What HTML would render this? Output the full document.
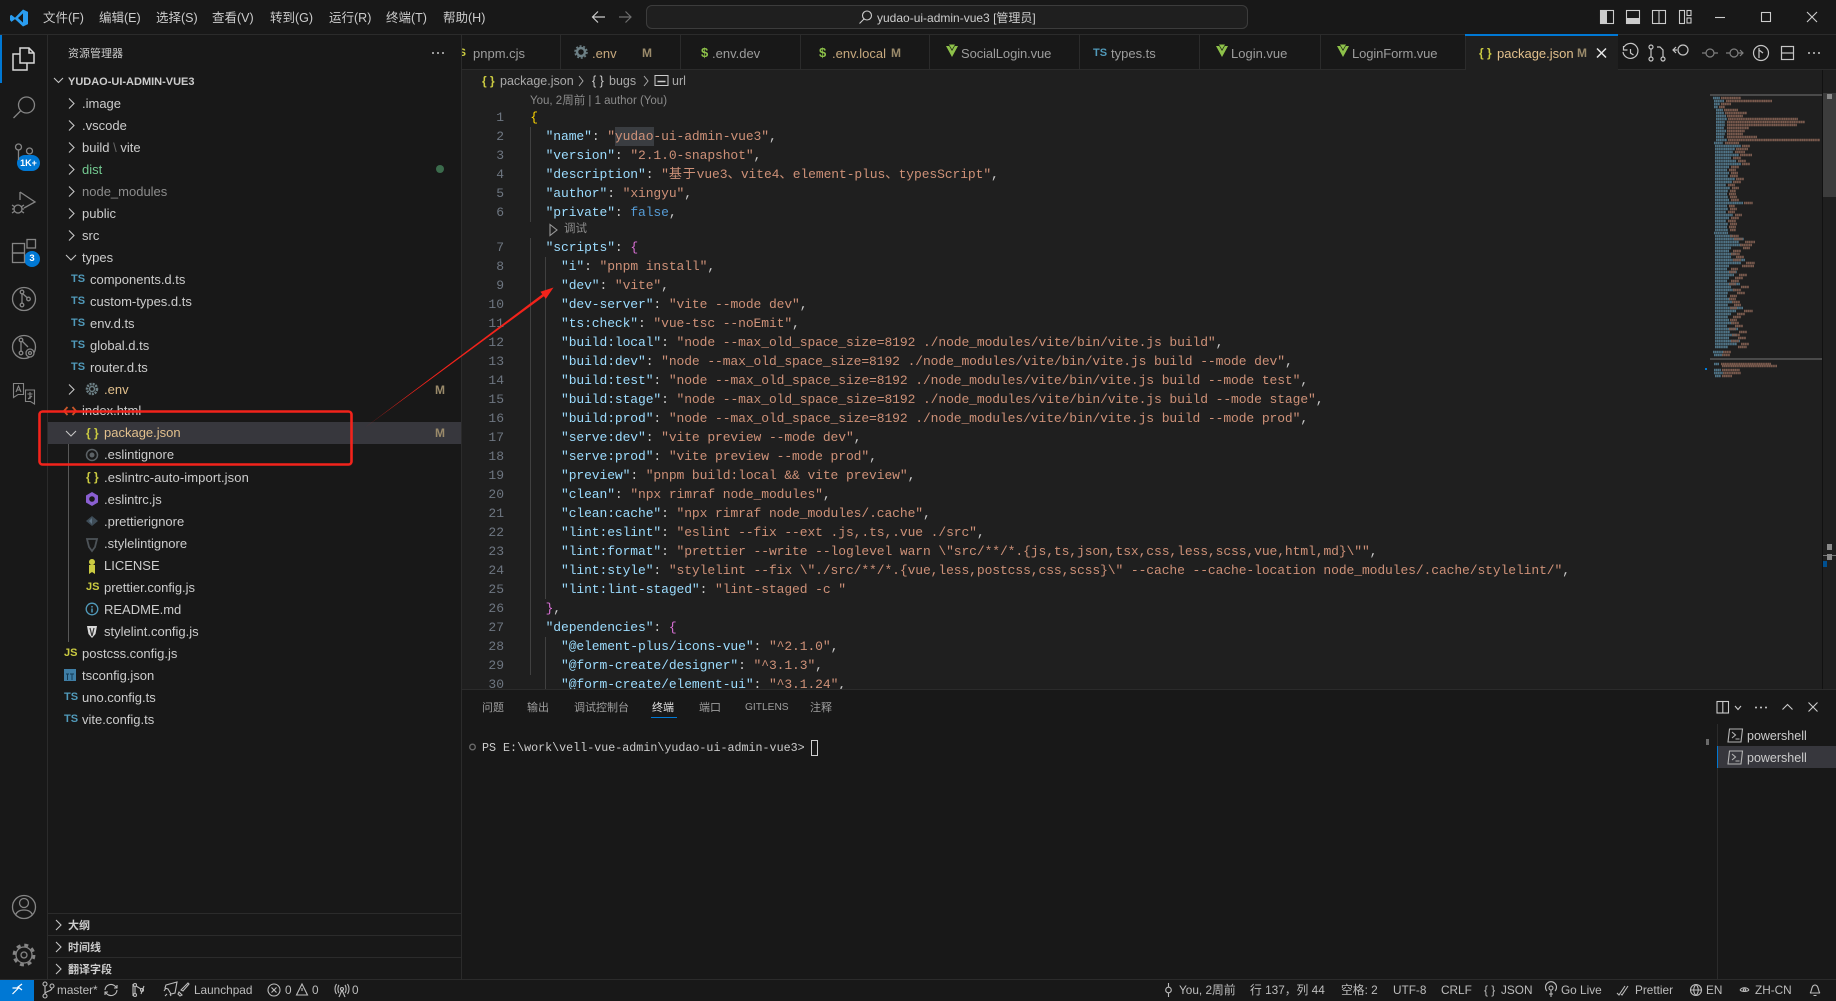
<!DOCTYPE html>
<html lang="zh-CN"><head><meta charset="utf-8"><title>package.json - yudao-ui-admin-vue3</title>
<style>
html,body{margin:0;padding:0;background:#181818;width:1836px;height:1001px;overflow:hidden}
body{position:relative;font-family:"Liberation Sans","Noto Sans CJK SC",sans-serif;font-size:13px;color:#ccc}
.b{position:absolute}
.w{position:absolute;left:0;top:1px;width:0;height:0}
.t{position:absolute;white-space:pre;height:22px;line-height:22px}
.g{color:#e2c08d}.d{color:#8c8c8c}
.ts{color:#519aba;font-weight:bold;font-size:11px}
.js{color:#cbcb41;font-weight:bold;font-size:11px}
.br{color:#cbcb41;font-weight:bold;font-size:12px}
.m{color:#9a8a6a;font-weight:bold;font-size:12px}
.tb{color:#9d9d9d}
pre{position:absolute;margin:0;font-family:"Liberation Mono","Noto Sans CJK SC",monospace;font-size:13px;line-height:19px;white-space:pre}
.n{left:470px;width:34px;text-align:right;color:#6e7681}
.c{left:530.2px;color:#ccc;letter-spacing:-.1px}
.k{color:#9cdcfe}.s{color:#ce9178}.f{color:#569cd6}.y{color:#ffd700}.p{color:#da70d6}
.st{font-size:11.8px;color:#bdbdbd}
.pt{font-size:11px;color:#9d9d9d}
.h{font-size:11px;font-weight:bold;color:#ccc}
</style></head><body>

<!-- backgrounds -->
<div class="b" style="left:0;top:0;width:1836px;height:34px;background:#181818;border-bottom:1px solid #2b2b2b"></div>
<div class="b" style="left:47px;top:35px;width:1px;height:944px;background:#2b2b2b"></div>
<div class="b" style="left:461px;top:35px;width:1px;height:944px;background:#2b2b2b"></div>
<div class="b" style="left:462px;top:35px;width:1374px;height:34px;background:#181818"></div>
<div class="b" style="left:462px;top:69px;width:1374px;height:1px;background:#2b2b2b"></div>
<div class="b" style="left:462px;top:70px;width:1374px;height:619px;background:#1f1f1f"></div>
<div class="b" style="left:462px;top:689px;width:1374px;height:1px;background:#2b2b2b"></div>
<div class="b" style="left:0;top:979px;width:1836px;height:1px;background:#2b2b2b"></div>
<div class="b" style="left:0;top:980px;width:34px;height:21px;background:#0078d4"></div>

<!-- explorer highlight -->
<div class="b" style="left:48px;top:422px;width:413px;height:22px;background:#37373d"></div>
<div class="b" style="left:68px;top:444px;width:1px;height:198px;background:#585858"></div>
<div class="b" style="left:48px;top:913px;width:413px;height:1px;background:#2b2b2b"></div>
<div class="b" style="left:48px;top:935px;width:413px;height:1px;background:#2b2b2b"></div>
<div class="b" style="left:48px;top:957px;width:413px;height:1px;background:#2b2b2b"></div>

<!-- tabs -->
<div class="b" style="left:560px;top:35px;width:1px;height:34px;background:#2b2b2b"></div>
<div class="b" style="left:680px;top:35px;width:1px;height:34px;background:#2b2b2b"></div>
<div class="b" style="left:800px;top:35px;width:1px;height:34px;background:#2b2b2b"></div>
<div class="b" style="left:929px;top:35px;width:1px;height:34px;background:#2b2b2b"></div>
<div class="b" style="left:1079px;top:35px;width:1px;height:34px;background:#2b2b2b"></div>
<div class="b" style="left:1199px;top:35px;width:1px;height:34px;background:#2b2b2b"></div>
<div class="b" style="left:1320px;top:35px;width:1px;height:34px;background:#2b2b2b"></div>
<div class="b" style="left:1465px;top:35px;width:153px;height:35px;background:#1f1f1f;border-left:1px solid #2b2b2b;box-sizing:border-box"></div>
<div class="b" style="left:1465px;top:34px;width:153px;height:2px;background:#0078d4"></div>

<!-- command center -->
<div class="b" style="left:646px;top:5px;width:602px;height:24px;box-sizing:border-box;background:#1f1f1f;border:1px solid #3c3c3c;border-radius:6px"></div>

<div class="w">
<!-- menu -->
<div class="t" style="left:43px;top:6px;font-size:12.5px">文件(F)</div>
<div class="t" style="left:99px;top:6px;font-size:12.5px">编辑(E)</div>
<div class="t" style="left:156px;top:6px;font-size:12.5px">选择(S)</div>
<div class="t" style="left:212px;top:6px;font-size:12.5px">查看(V)</div>
<div class="t" style="left:270px;top:6px;font-size:12.5px">转到(G)</div>
<div class="t" style="left:329px;top:6px;font-size:12.5px">运行(R)</div>
<div class="t" style="left:386px;top:6px;font-size:12.5px">终端(T)</div>
<div class="t" style="left:443px;top:6px;font-size:12.5px">帮助(H)</div>
<div class="t" style="left:877px;top:6px;font-size:12px">yudao-ui-admin-vue3 [管理员]</div>

<!-- explorer -->
<div class="t" style="left:68px;top:42px;font-size:11px">资源管理器</div>
<div class="t h" style="left:68px;top:70px">YUDAO-UI-ADMIN-VUE3</div>
<div class="t" style="left:82px;top:92px">.image</div>
<div class="t" style="left:82px;top:114px">.vscode</div>
<div class="t" style="left:82px;top:136px">build<span style="color:#666"> \ </span>vite</div>
<div class="t" style="left:82px;top:158px;color:#73c991">dist</div>
<div class="t d" style="left:82px;top:180px">node_modules</div>
<div class="t" style="left:82px;top:202px">public</div>
<div class="t" style="left:82px;top:224px">src</div>
<div class="t" style="left:82px;top:246px">types</div>
<div class="t ts" style="left:71px;top:267px">TS</div><div class="t" style="left:90px;top:268px">components.d.ts</div>
<div class="t ts" style="left:71px;top:289px">TS</div><div class="t" style="left:90px;top:290px">custom-types.d.ts</div>
<div class="t ts" style="left:71px;top:311px">TS</div><div class="t" style="left:90px;top:312px">env.d.ts</div>
<div class="t ts" style="left:71px;top:333px">TS</div><div class="t" style="left:90px;top:334px">global.d.ts</div>
<div class="t ts" style="left:71px;top:355px">TS</div><div class="t" style="left:90px;top:356px">router.d.ts</div>
<div class="t g" style="left:104px;top:378px">.env</div>
<div class="t m" style="left:435px;top:378px">M</div>
<div class="t" style="left:82px;top:399px">index.html</div>
<div class="t br" style="left:86px;top:421px">{ }</div>
<div class="t g" style="left:104px;top:421px">package.json</div>
<div class="t m" style="left:435px;top:421px">M</div>
<div class="t" style="left:104px;top:443px">.eslintignore</div>
<div class="t br" style="left:86px;top:465px">{ }</div>
<div class="t" style="left:104px;top:466px;letter-spacing:.1px">.eslintrc-auto-import.json</div>
<div class="t" style="left:104px;top:488px">.eslintrc.js</div>
<div class="t" style="left:104px;top:510px">.prettierignore</div>
<div class="t" style="left:104px;top:532px">.stylelintignore</div>
<div class="t" style="left:104px;top:554px">LICENSE</div>
<div class="t js" style="left:86px;top:575px">JS</div><div class="t" style="left:104px;top:576px">prettier.config.js</div>
<div class="t" style="left:104px;top:598px">README.md</div>
<div class="t" style="left:104px;top:620px">stylelint.config.js</div>
<div class="t js" style="left:64px;top:641px">JS</div><div class="t" style="left:82px;top:642px">postcss.config.js</div>
<div class="t" style="left:82px;top:664px">tsconfig.json</div>
<div class="t ts" style="left:64px;top:685px">TS</div><div class="t" style="left:82px;top:686px">uno.config.ts</div>
<div class="t ts" style="left:64px;top:707px">TS</div><div class="t" style="left:82px;top:708px">vite.config.ts</div>
<div class="t h" style="left:68px;top:914px">大纲</div>
<div class="t h" style="left:68px;top:936px">时间线</div>
<div class="t h" style="left:68px;top:958px">翻译字段</div>

<!-- tab labels -->
<div class="t tb" style="left:473px;top:42px">pnpm.cjs</div>
<div class="t" style="left:592px;top:42px;color:#c7a97e">.env</div><div class="t m" style="left:642px;top:41px">M</div>
<div class="t" style="left:701px;top:41px;color:#8dc149;font-weight:bold">$</div><div class="t tb" style="left:712px;top:42px">.env.dev</div>
<div class="t" style="left:819px;top:41px;color:#8dc149;font-weight:bold">$</div><div class="t" style="left:832px;top:42px;color:#c7a97e">.env.local</div><div class="t m" style="left:891px;top:41px">M</div>
<div class="t tb" style="left:961px;top:42px;letter-spacing:-.1px">SocialLogin.vue</div>
<div class="t ts" style="left:1093px;top:41px">TS</div><div class="t tb" style="left:1111px;top:42px">types.ts</div>
<div class="t tb" style="left:1231px;top:42px">Login.vue</div>
<div class="t tb" style="left:1352px;top:42px;letter-spacing:-.1px">LoginForm.vue</div>
<div class="t br" style="left:1479px;top:41px">{ }</div><div class="t g" style="left:1497px;top:42px">package.json</div><div class="t m" style="left:1577px;top:41px">M</div>
</div>
<div class="b" style="left:462px;top:46px;width:4px;height:14px;overflow:hidden"><div class="t js" style="right:0;top:-4px">JS</div></div>

<!-- breadcrumbs -->
<div class="t br" style="left:482px;top:70px">{ }</div>
<div class="t" style="left:500px;top:70px;font-size:12.5px;color:#a9a9a9">package.json</div>
<div class="t" style="left:592px;top:70px;font-size:12.5px;color:#ccc">{ }</div>
<div class="t" style="left:609px;top:70px;font-size:12.5px;color:#a9a9a9">bugs</div>
<div class="t" style="left:672px;top:70px;font-size:12.5px;color:#a9a9a9">url</div>
<div class="t" style="left:530px;top:90px;font-size:11.5px;color:#8b8b8b">You, 2周前 | 1 author (You)</div>
<div class="t" style="left:564px;top:218px;font-size:11.5px;color:#8b8b8b">调试</div>

<!-- indent guides and selection -->
<div class="b" style="left:530px;top:127px;width:1px;height:95px;background:#404040"></div>
<div class="b" style="left:530px;top:238px;width:1px;height:437px;background:#404040"></div>
<div class="b" style="left:545px;top:257px;width:1px;height:342px;background:#404040"></div>
<div class="b" style="left:545px;top:637px;width:1px;height:52px;background:#404040"></div>
<div class="b" style="left:615px;top:127px;width:39px;height:19px;background:#3a3d41"></div>

<!-- code -->
<div class="b" style="left:462px;top:70px;width:1246px;height:619px;overflow:hidden">
<pre class="n" style="left:8px;top:38px">1
2
3
4
5
6</pre>
<pre class="n" style="left:8px;top:168px">7
8
9
10
11
12
13
14
15
16
17
18
19
20
21
22
23
24
25
26
27
28
29
30</pre>
<pre class="c" style="left:68.2px;top:38px"><span class="y">{</span>
  <span class="k">"name"</span>: <span class="s">"yudao-ui-admin-vue3"</span>,
  <span class="k">"version"</span>: <span class="s">"2.1.0-snapshot"</span>,
  <span class="k">"description"</span>: <span class="s">"<span style="letter-spacing:.9px">基于</span>vue3<span style="letter-spacing:.4px">、</span>vite4<span style="letter-spacing:.4px">、</span>element-plus<span style="letter-spacing:.4px">、</span>typesScript"</span>,
  <span class="k">"author"</span>: <span class="s">"xingyu"</span>,
  <span class="k">"private"</span>: <span class="f">false</span>,</pre>
<pre class="c" style="left:68.2px;top:168px">  <span class="k">"scripts"</span>: <span class="p">{</span>
    <span class="k">"i"</span>: <span class="s">"pnpm install"</span>,
    <span class="k">"dev"</span>: <span class="s">"vite"</span>,
    <span class="k">"dev-server"</span>: <span class="s">"vite --mode dev"</span>,
    <span class="k">"ts:check"</span>: <span class="s">"vue-tsc --noEmit"</span>,
    <span class="k">"build:local"</span>: <span class="s">"node --max_old_space_size=8192 ./node_modules/vite/bin/vite.js build"</span>,
    <span class="k">"build:dev"</span>: <span class="s">"node --max_old_space_size=8192 ./node_modules/vite/bin/vite.js build --mode dev"</span>,
    <span class="k">"build:test"</span>: <span class="s">"node --max_old_space_size=8192 ./node_modules/vite/bin/vite.js build --mode test"</span>,
    <span class="k">"build:stage"</span>: <span class="s">"node --max_old_space_size=8192 ./node_modules/vite/bin/vite.js build --mode stage"</span>,
    <span class="k">"build:prod"</span>: <span class="s">"node --max_old_space_size=8192 ./node_modules/vite/bin/vite.js build --mode prod"</span>,
    <span class="k">"serve:dev"</span>: <span class="s">"vite preview --mode dev"</span>,
    <span class="k">"serve:prod"</span>: <span class="s">"vite preview --mode prod"</span>,
    <span class="k">"preview"</span>: <span class="s">"pnpm build:local &amp;&amp; vite preview"</span>,
    <span class="k">"clean"</span>: <span class="s">"npx rimraf node_modules"</span>,
    <span class="k">"clean:cache"</span>: <span class="s">"npx rimraf node_modules/.cache"</span>,
    <span class="k">"lint:eslint"</span>: <span class="s">"eslint --fix --ext .js,.ts,.vue ./src"</span>,
    <span class="k">"lint:format"</span>: <span class="s">"prettier --write --loglevel warn \"src/**/*.{js,ts,json,tsx,css,less,scss,vue,html,md}\""</span>,
    <span class="k">"lint:style"</span>: <span class="s">"stylelint --fix \"./src/**/*.{vue,less,postcss,css,scss}\" --cache --cache-location node_modules/.cache/stylelint/"</span>,
    <span class="k">"lint:lint-staged"</span>: <span class="s">"lint-staged -c "</span>
  <span class="p">}</span>,
  <span class="k">"dependencies"</span>: <span class="p">{</span>
    <span class="k">"@element-plus/icons-vue"</span>: <span class="s">"^2.1.0"</span>,
    <span class="k">"@form-create/designer"</span>: <span class="s">"^3.1.3"</span>,
    <span class="k">"@form-create/element-ui"</span>: <span class="s">"^3.1.24"</span>,</pre>
</div>

<!-- scrollbar -->
<div class="b" style="left:1822px;top:70px;width:1px;height:619px;background:#111"></div>
<div class="b" style="left:1823px;top:93px;width:13px;height:104px;background:#3c3c3c"></div>
<div class="b" style="left:1827px;top:94px;width:5px;height:5px;background:#8a8a8a"></div>
<div class="b" style="left:1827px;top:544px;width:5px;height:6px;background:#8a8a8a"></div>
<div class="b" style="left:1823px;top:555px;width:13px;height:1px;background:#777"></div>
<div class="b" style="left:1827px;top:554px;width:5px;height:6px;background:#8a8a8a"></div>
<div class="b" style="left:1823px;top:561px;width:4px;height:6px;background:#004f8f"></div>

<!-- panel -->
<div class="t pt" style="left:482px;top:697px">问题</div>
<div class="t pt" style="left:527px;top:697px">输出</div>
<div class="t pt" style="left:574px;top:697px">调试控制台</div>
<div class="t pt" style="left:652px;top:697px;color:#e0e0e0">终端</div>
<div class="b" style="left:651px;top:717px;width:26px;height:1px;background:#0078d4"></div>
<div class="t pt" style="left:699px;top:697px">端口</div>
<div class="t pt" style="left:745px;top:697px;font-size:10.2px">GITLENS</div>
<div class="t pt" style="left:810px;top:697px">注释</div>
<pre style="left:482px;top:738px;font-size:11.7px;line-height:20px;color:#ccc">PS E:\work\vell-vue-admin\yudao-ui-admin-vue3&gt;</pre>
<div class="b" style="left:811px;top:740px;width:7px;height:16px;box-sizing:border-box;border:1px solid #d0d0d0"></div>
<div class="b" style="left:1717px;top:724px;width:1px;height:255px;background:#2b2b2b"></div>
<div class="b" style="left:1718px;top:746px;width:118px;height:22px;background:#37373d"></div>
<div class="b" style="left:1717px;top:746px;width:1px;height:22px;background:#0078d4"></div>
<div class="b" style="left:1706px;top:739px;width:3px;height:6px;background:#6a6a6a"></div>
<div class="t" style="left:1747px;top:725px;font-size:12.5px;color:#ccc">powershell</div>
<div class="t" style="left:1747px;top:747px;font-size:12.5px;color:#ccc">powershell</div>

<!-- status bar -->
<div class="t st" style="left:57px;top:979px">master*</div>
<div class="t st" style="left:194px;top:979px">Launchpad</div>
<div class="t st" style="left:285px;top:979px">0</div>
<div class="t st" style="left:312px;top:979px">0</div>
<div class="t st" style="left:352px;top:979px">0</div>
<div class="t st" style="left:1179px;top:979px">You, 2周前</div>
<div class="t st" style="left:1250px;top:979px">行 137，列 44</div>
<div class="t st" style="left:1341px;top:979px">空格: 2</div>
<div class="t st" style="left:1393px;top:979px">UTF-8</div>
<div class="t st" style="left:1441px;top:979px">CRLF</div>
<div class="t st" style="left:1484px;top:979px">{ }</div>
<div class="t st" style="left:1501px;top:979px">JSON</div>
<div class="t st" style="left:1561px;top:979px">Go Live</div>
<div class="t st" style="left:1635px;top:979px">Prettier</div>
<div class="t st" style="left:1706px;top:979px">EN</div>
<div class="t st" style="left:1755px;top:979px">ZH-CN</div>

<!-- badges -->
<div class="b" style="left:17px;top:155px;width:23px;height:16px;border-radius:8px;background:#0078d4"></div>
<div class="t" style="left:17px;top:152px;width:23px;text-align:center;font-size:9px;font-weight:bold;color:#fff">1K+</div>
<div class="b" style="left:24px;top:251px;width:16px;height:16px;border-radius:8px;background:#0078d4"></div>
<div class="t" style="left:24px;top:248px;width:16px;text-align:center;font-size:9.5px;font-weight:bold;color:#fff">3</div>

<!-- icons -->
<svg class="b" style="left:0;top:0" width="1836" height="1001" viewBox="0 0 1836 1001" fill="none">
<!-- logo -->
<path fill="#2a9df0" d="M21 10.500l5 2.400v12.200l-5 2.400-8-7.400-3.600 2.800L8 21v-4.200l1.400-.9 3.600 2.800zM21 14.400l-5 4.600 5 4.600z" transform="translate(2 -1)"/>
<!-- title arrows -->
<path stroke="#ccc" stroke-width="1.200" d="M593 17h12M598 11.500L592.500 17l5.500 5.500"/>
<path stroke="#6f6f6f" stroke-width="1.200" d="M619 17h12M625.500 11.500L631 17l-5.500 5.500"/>
<circle cx="867" cy="15.500" r="4.500" stroke="#ccc" stroke-width="1.100"/><path stroke="#ccc" stroke-width="1.100" d="M864 19l-4.500 4.500"/>
<!-- layout icons -->
<g stroke="#ccc" stroke-width="1.100" transform="translate(-3 0)">
<rect x="1603.500" y="10.500" width="13" height="13"/><rect x="1604" y="11" width="6" height="12" fill="#ccc" stroke="none"/>
<rect x="1629.500" y="10.500" width="13" height="13"/><rect x="1630" y="18" width="12" height="5" fill="#ccc" stroke="none"/>
<rect x="1655.500" y="10.500" width="13" height="13"/><path d="M1662 10.500v13"/>
<rect x="1682.500" y="10.500" width="5" height="13"/><rect x="1690" y="10.500" width="4" height="5"/><rect x="1690" y="18" width="4" height="5"/>
<path d="M1718 17.500h10"/><rect x="1764.500" y="12.500" width="9" height="9"/><path d="M1810 12l10 10M1820 12l-10 10"/>
</g>
<!-- activity bar -->
<rect x="0" y="35" width="2" height="48" fill="#0078d4"/>
<g stroke="#d7d7d7" stroke-width="1.500"><path d="M20 60V48h9l5 5v10H20zM29 48v5h5"/><path d="M20 54h-7v16h14v-7"/></g>
<g stroke="#858585" stroke-width="1.300">
<circle cx="26.500" cy="105" r="8"/><path d="M20.500 111l-7 7"/>
<circle cx="18.500" cy="147" r="3"/><circle cx="29.500" cy="151" r="3"/><path d="M18.500 150v10"/>
<path d="M20 192l15 10-11 6M20 192v8"/><circle cx="18" cy="209" r="4"/><path d="M12 205l3 2M24 205l-3 2M12 213l3-2M24 213l-3-2M12 209h2M24 209h-2"/>
<rect x="12.500" y="243.500" width="12" height="9.500"/><rect x="12.500" y="253" width="12" height="9.500"/><rect x="27" y="239.500" width="8.500" height="8.500"/>
<circle cx="24" cy="299" r="11.500"/><circle cx="22" cy="292" r="1.800"/><circle cx="22" cy="305" r="1.800"/><circle cx="28.500" cy="299" r="1.800"/><path d="M22 294v9M22.500 293.500l5 4.500"/>
<circle cx="24" cy="347" r="11.500"/><circle cx="21" cy="340" r="1.800"/><circle cx="21" cy="353" r="1.800"/><path d="M21 342v9M22 341l6 6"/><circle cx="30" cy="353" r="4" fill="#181818"/><circle cx="30" cy="353" r="1.500"/>
<g stroke-width="1.100"><path d="M13.500 383.500h10v11h-5.500l-4.500 3zM25.500 390h9v14l-4-2.500h-5zM16 392l2.500-6 2.500 6M17 390h3M27.500 394h5M30 392v7M28 399l4-3"/></g>
<circle cx="24" cy="907" r="11.500"/><circle cx="24" cy="903" r="4.500"/><path d="M15.500 915c1.500-4 5-5 8.500-5s7 1 8.500 5"/>
<circle cx="24" cy="955" r="3"/><circle cx="24" cy="955" r="8"/><circle cx="24" cy="955" r="10" stroke-width="2.800" stroke-dasharray="4 3.850"/>
</g>
<!-- explorer chevrons -->
<g stroke="#c5c5c5" stroke-width="1.100">
<path d="M54 78l4.500 4.500L63 78"/>
<path d="M69 98.500l5 5-5 5M69 120.500l5 5-5 5M69 142.500l5 5-5 5M69 164.500l5 5-5 5M69 186.500l5 5-5 5M69 208.500l5 5-5 5M69 230.500l5 5-5 5"/>
<path d="M66 255l5 5 5-5"/>
<path d="M69 384.500l5 5-5 5"/>
<path d="M66 431l5 5 5-5"/>
<path d="M56 920l5 5-5 5M56 942l5 5-5 5M56 964l5 5-5 5"/>
</g>
<g fill="#c5c5c5"><circle cx="433" cy="53" r="1"/><circle cx="438" cy="53" r="1"/><circle cx="443" cy="53" r="1"/></g>
<circle cx="440" cy="169" r="4" fill="#3b6b4c"/>
<!-- explorer file icons -->
<circle cx="92" cy="389" r="5" stroke="#6d8086" stroke-width="2.500" stroke-dasharray="2 1"/><circle cx="92" cy="389" r="2.500" stroke="#6d8086" stroke-width="1.500"/>
<path stroke="#c9562a" stroke-width="1.800" d="M67.500 407l-3.500 4 3.500 4M72.500 407l3.500 4-3.500 4"/>
<circle cx="92" cy="455" r="5.500" stroke="#5c6266" stroke-width="1.500"/><circle cx="92" cy="455" r="2.500" fill="#5c6266"/>
<path d="M92 492l6 3.500v7l-6 3.500-6-3.500v-7z" fill="#8a5fd1"/><circle cx="92" cy="499" r="2.800" fill="#1a1a1a"/>
<path d="M92 516l6 5-6 5-6-5z" fill="#3e4c57"/><path d="M89 521l3-3v6z" fill="#5d7283"/>
<path d="M87 539h10l-2 8-3 4-3-4z" fill="none" stroke="#4d5358" stroke-width="1.800"/>
<path d="M92 559a3 3 0 1 1-.01 0zM89 565v9l3-2 3 2v-9" fill="#cbcb41"/>
<circle cx="92" cy="609" r="5.800" stroke="#519aba" stroke-width="1.300"/><path d="M92 606v1.500M92 608.500v4" stroke="#519aba" stroke-width="1.500"/>
<path d="M87 626h10l-1.500 8-3.500 4-3.500-4z" fill="#d9d9d9"/><path d="M90 628l2 8 2-8" stroke="#333" stroke-width="1.200"/>
<rect x="64" y="669" width="12" height="12" fill="#3f7ea6"/><path d="M70 674h4M72 674v6M66 674h3M67.500 674v6" stroke="#123a55" stroke-width="1"/>
<!-- tab icons -->
<circle cx="581" cy="52" r="4" stroke="#6d8086" stroke-width="2.500"/><circle cx="581" cy="52" r="6" stroke="#6d8086" stroke-width="1.500" stroke-dasharray="2 1.800"/>
<path fill="#8dc149" d="M946 46h3.200l2.800 5 2.800-5h3.200l-6 11z M947 44.500h2l3 5 3-5h2" />
<path fill="#8dc149" d="M1216 46h3.200l2.800 5 2.800-5h3.200l-6 11z M1217 44.500h2l3 5 3-5h2"/>
<path fill="#8dc149" d="M1337 46h3.200l2.800 5 2.800-5h3.200l-6 11z M1338 44.500h2l3 5 3-5h2"/>
<path stroke="#e8e8e8" stroke-width="1.500" d="M1597 48.500l9 9M1606 48.500l-9 9"/>
<!-- editor actions -->
<g stroke="#c5c5c5" stroke-width="1.200" transform="translate(-3 0)">
<path d="M1627 47a7.500 7.500 0 1 1-1 5M1626.500 46v4h4M1633.500 49v4l3 2"/>
<circle cx="1654" cy="47" r="2"/><circle cx="1666" cy="59" r="2"/><circle cx="1654" cy="59" r="2"/><path d="M1654 49v8M1666 57v-7l-3-3h-3"/>
<circle cx="1686" cy="50" r="5"/><path d="M1680 50h-3.500M1679 47l-3 3 3 3M1683 58h.01M1686 58h.01M1689 58h.01"/>
<g stroke="#7f7f7f"><circle cx="1713" cy="53" r="4"/><path d="M1705 53h4M1717 53h4"/><circle cx="1737" cy="53" r="4"/><path d="M1729 53h4M1741 53h5M1743 50l3 3-3 3"/></g>
<circle cx="1764" cy="53" r="7.500"/><path d="M1762 48v10M1762 50l4 3"/>
<rect x="1784.500" y="46.500" width="12" height="13"/><path d="M1784.500 53h12"/>
</g>
<g fill="#c5c5c5"><circle cx="1809" cy="53" r="1"/><circle cx="1814" cy="53" r="1"/><circle cx="1819" cy="53" r="1"/></g>
<!-- breadcrumb icons -->
<path stroke="#a9a9a9" stroke-width="1" d="M579 76l4 5-4 5M644 76l4 5-4 5"/>
<rect x="655" y="75.500" width="13" height="10" stroke="#ccc" stroke-width="1"/><path d="M657.500 81.500h8" stroke="#ccc" stroke-width="1.500"/>
<path d="M550 223.500l7 5.500-7 5.500z" transform="translate(0 1)" stroke="#9a9a9a" stroke-width="1.100"/>
<!-- panel icons -->
<circle cx="472.500" cy="747" r="2.800" stroke="#6a6a6a" stroke-width="1.300"/>
<g stroke="#ccc" stroke-width="1.100">
<rect x="1717" y="701.500" width="11.500" height="11.500"/><path d="M1722.800 701.500v11.500"/>
<path d="M1735 706l3 3.500 3-3.500"/><path d="M1782.500 709.500l5-5 5 5"/><path d="M1808.500 702.500l9 9M1817.500 702.500l-9 9"/>
<path d="M1729.500 729h13l-1.500 13h-13z" stroke="#b5b5b5"/><path d="M1732 732l3.500 3-3.500 3M1735.500 739h4" stroke="#b5b5b5"/>
<path d="M1729.500 751h13l-1.500 13h-13z" stroke="#b5b5b5"/><path d="M1732 754l3.500 3-3.500 3M1735.500 761h4" stroke="#b5b5b5"/>
</g>
<g fill="#ccc"><circle cx="1756" cy="707.500" r="1"/><circle cx="1761" cy="707.500" r="1"/><circle cx="1766" cy="707.500" r="1"/></g>
<!-- status icons -->
<path stroke="#fff" stroke-width="1.200" d="M12.500 994l6-6-6-0M22 984l-4 3 4 3"/>
<g stroke="#bdbdbd" stroke-width="1.100">
<circle cx="45" cy="984" r="2"/><circle cx="45" cy="996" r="2"/><circle cx="52" cy="986" r="2"/><path d="M45 986v8M52 988c0 3-5 3-7 5"/>
<path d="M105 990a6 6 0 0 1 10-4l2 2M117 990a6 6 0 0 1-10 4l-2-2M117 985v3h-3M105 995v-3h3"/>
<circle cx="135" cy="985" r="1.500"/><circle cx="135" cy="995" r="1.500"/><circle cx="142" cy="990" r="1.500"/><path d="M135 987v6M136 986l5 3M133 984v12M144 986l-3 8"/>
<path d="M166 985l11-3-2 11-4 1-3-5-3-1zM166 988l-2 3M170 994l1 2M165 996l2-2"/>
<path d="M181 990l7-7 1 1-6 7zM179 992l3 3-2 1-2-2z"/>
<circle cx="274" cy="990" r="6"/><path d="M271.500 987.500l5 5M276.500 987.500l-5 5"/>
<path d="M302 984l5.500 11h-11zM302 988v3"/>
<circle cx="342" cy="989" r="1.500"/><path d="M342 990l-3 7M342 990l3 7M339 985c-1.500 2-1.500 6 0 8M345 985c1.500 2 1.500 6 0 8M336.500 984c-2 3-2 7 0 10M347.500 984c2 3 2 7 0 10"/>
<circle cx="1168.500" cy="990" r="2.800"/><path d="M1168.500 983v4M1168.500 993v4"/>
<g transform="translate(-3 0)"><circle cx="1554" cy="988" r="2"/><path d="M1550 991a5.500 5.500 0 1 1 8 0M1554 990v7M1552 994h4"/></g>
<path d="M1617 993l2 2 6-9M1621 994l1 1 6-9"/>
<circle cx="1696" cy="990" r="5.500"/><path d="M1690.500 990h11M1696 984.500c-3 3-3 8 0 11M1696 984.500c3 3 3 8 0 11"/>
<path d="M1740 990c2-3 7-3 9 0M1740 990c2 2 7 2 9 0"/><circle cx="1744.500" cy="990" r="1.200"/>
<path d="M1810 993c2-1 1-8 5-8s3 7 5 8zM1813.500 995.500h3"/>
</g>
<!-- minimap -->
<rect x="1710" y="94" width="112" height="2" fill="#4a4a4a"/>
<rect x="1710" y="358" width="112" height="2" fill="#4a4a4a"/>
<rect x="1705" y="368" width="2" height="2" fill="#0078d4"/>
<path stroke="#4f7386" stroke-width="2.500" stroke-dasharray="1.500 .3" d="M1713 98h7M1714 101h10M1714 104h6M1714 107h4M1716 110h7M1716 113h8M1716 116h10M1716 119h11M1716 122h9M1716 125h9M1716 128h8M1716 131h10M1716 134h9M1716 137h8M1716 140h11M1714 143h9M1715 146h26M1715 149h20M1715 152h18M1715 155h24M1715 158h16M1715 161h21M1715 164h26M1715 167h14M1715 170h12M1715 173h14M1715 176h13M1715 179h20M1715 182h17M1715 185h11M1715 188h15M1715 191h13M1715 194h12M1715 197h13M1715 200h14M1715 203h28M1715 206h12M1715 209h13M1715 212h11M1715 215h18M1715 218h14M1715 221h11M1715 224h13M1715 227h12M1715 230h13M1714 233h14M1715 236h17M1715 239h29M1715 242h24M1715 245h27M1715 248h16M1715 251h14M1715 254h20M1715 257h16M1715 260h30M1715 263h26M1715 266h14M1715 269h12M1715 272h22M1715 275h19M1715 278h14M1715 281h12M1715 284h25M1715 287h16M1715 290h20M1715 293h13M1715 296h12M1715 299h15M1715 302h17M1715 305h13M1715 308h28M1715 311h21M1715 314h16M1715 317h13M1715 320h14M1715 323h19M1715 326h12M1715 329h23M1715 332h15M1715 335h22M1715 338h14M1715 341h25M1715 344h22M1715 347h13M1713 352h10M1714 355h8M1714 364h5M1714 370h7M1714 373h9M1715 376h6"/>
<path stroke="#7a5b4e" stroke-width="2.500" stroke-dasharray="1.500 .3" d="M1721 98h20M1726 101h46M1721 104h10M1719 107h6M1724 110h14M1725 113h22M1727 116h16M1728 119h70M1727 122h78M1727 125h70M1727 128h22M1727 131h18M1727 134h16M1727 137h30M1728 140h92M1725 143h14M1742 146h8M1736 149h12M1735 152h10M1740 155h12M1733 158h8M1738 161h8M1742 164h8M1731 167h8M1729 170h7M1731 173h7M1730 176h8M1736 179h8M1733 182h8M1728 185h7M1732 188h7M1730 191h6M1729 194h7M1730 197h7M1731 200h8M1744 203h9M1729 206h6M1730 209h7M1728 212h7M1735 215h7M1731 218h8M1728 221h8M1730 224h7M1729 227h7M1730 230h6M1730 236h9M1734 239h9M1745 242h10M1740 245h12M1743 248h7M1733 251h8M1731 254h9M1736 257h8M1733 260h8M1746 263h9M1742 266h12M1731 269h7M1729 272h7M1739 275h8M1735 278h8M1731 281h8M1729 284h7M1741 287h8M1733 290h8M1737 293h8M1730 296h7M1729 299h7M1732 302h8M1734 305h7M1730 308h7M1744 311h9M1737 314h8M1733 317h8M1730 320h7M1731 323h8M1735 326h8M1729 329h7M1739 332h8M1732 335h8M1738 338h8M1731 341h8M1741 344h8M1738 347h9M1723 352h8M1722 355h8M1721 364h50M1722 370h18M1723 373h18M1722 376h10M1722 366h55"/>
</svg>

<!-- annotations -->
<svg class="b" style="left:0;top:0" width="1836" height="1001" viewBox="0 0 1836 1001" fill="none">
<rect x="39.500" y="411.500" width="312" height="53" rx="3" stroke="#f2231b" stroke-width="2.600"/>
<path fill="#f2231b" d="M365 427.500L542.300 294.300 540.400 291.700 553.500 287.500 545.800 298.900 543.900 296.300z"/>
</svg>
</body></html>
